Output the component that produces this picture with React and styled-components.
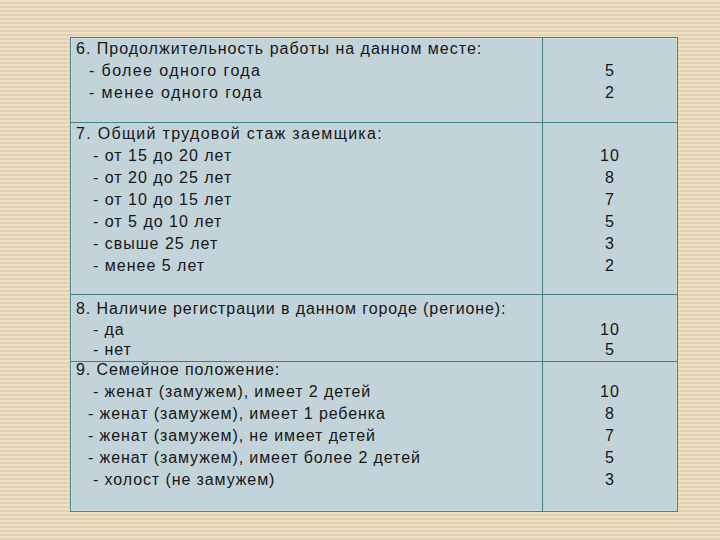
import styled, { createGlobalStyle } from 'styled-components';

const Global = createGlobalStyle`
    html, body {
        margin: 0;
        padding: 0;
    }
    body {
        width: 720px;
        height: 540px;
        overflow: hidden;
        background: repeating-linear-gradient(
            to bottom,
            #eee0c5 0px,
            #eee0c5 2px,
            #e4d1af 2px,
            #e4d1af 4px
        );
        font-family: "Liberation Sans", Arial, sans-serif;
    }
`

const Page = styled.div
`
    padding: 37px 0 0 70px;
`

const Table = styled.div
`
    width: 608px;
    box-sizing: border-box;
    border: 1px solid #467e86;
    background: #c3d3da;
    color: #161616;
    box-shadow: inset 0 0 0 1px #d3e0e5;
`

const Row = styled.div
`
    display: grid;
    grid-template-columns: 472px 1fr;
    height: ${p => p.$h}px;
    box-sizing: border-box;
    border-top: ${p => p.$first ? 'none' : '1px solid #467e86'};
`

const Cell = styled.div
`
    box-sizing: border-box;
    border-right: ${p => p.$left ? '1px solid #467e86' : 'none'};
    padding-top: ${p => p.$pt || 0}px;
    margin-top: ${p => p.$shift || 0}px;
    text-align: ${p => p.$left ? 'left' : 'center'};
    font-size: 16px;
    line-height: ${p => p.$lh}px;
`

const Line = styled.div
`
    padding-left: ${p => p.$indent}px;
    white-space: nowrap;
    height: ${p => p.$lh}px;
    letter-spacing: ${p => p.$ls || 0}px;
`

const Score = styled.div
`
    height: ${p => p.$lh}px;
    font-size: 16px;
    letter-spacing: 1px;
`

const rows = [
    {
        h: 84, lh: 22, pt: 0, shift: 0, tls: 1, ils: 1.4,
        title: '6. Продолжительность работы на данном месте:',
        items: [
            ['- более одного года', 18],
            ['- менее одного года', 18],
        ],
        scores: ['5', '2'],
    },
    {
        h: 172, lh: 22, pt: 0, shift: 0, tls: 1.3, ils: 1,
        title: '7. Общий трудовой стаж заемщика:',
        items: [
            ['- от 15 до 20 лет', 22],
            ['- от 20 до 25 лет', 22],
            ['- от 10 до 15 лет', 22],
            ['- от 5 до 10 лет', 22],
            ['- свыше 25 лет', 22],
            ['- менее 5 лет', 22],
        ],
        scores: ['10', '8', '7', '5', '3', '2'],
    },
    {
        h: 67, lh: 20.5, pt: 4, shift: 0, tls: 0.9, ils: 0.9,
        title: '8. Наличие регистрации в данном городе (регионе):',
        items: [
            ['- да', 22],
            ['- нет', 22],
        ],
        scores: ['10', '5'],
    },
    {
        h: 150, lh: 22, pt: 0, shift: -3, tls: 0.9, ils: 0.9,
        title: '9. Семейное положение:',
        items: [
            ['- женат (замужем), имеет 2 детей', 22],
            ['- женат (замужем), имеет 1 ребенка', 17],
            ['- женат (замужем), не имеет детей', 17],
            ['- женат (замужем), имеет более 2 детей', 17],
            ['- холост (не замужем)', 22],
        ],
        scores: ['10', '8', '7', '5', '3'],
    },
]

export default function App() {
    return (
        <>
            <Global />
            <Page>
                <Table>
                    {rows.map((r, i) => (
                        <Row key={i} $h={r.h} $first={i === 0}>
                            <Cell $left $lh={r.lh} $pt={r.pt} $shift={r.shift}>
                                <Line $indent={5} $lh={r.lh} $ls={r.tls}>{r.title}</Line>
                                {r.items.map(([txt, ind]) => (
                                    <Line key={txt} $indent={ind} $lh={r.lh} $ls={r.ils}>{txt}</Line>
                                ))}
                            </Cell>
                            <Cell $lh={r.lh} $pt={r.pt} $shift={r.shift}>
                                <Score $lh={r.lh} />
                                {r.scores.map((s, j) => (
                                    <Score key={j} $lh={r.lh}>{s}</Score>
                                ))}
                            </Cell>
                        </Row>
                    ))}
                </Table>
            </Page>
        </>
    )
}
